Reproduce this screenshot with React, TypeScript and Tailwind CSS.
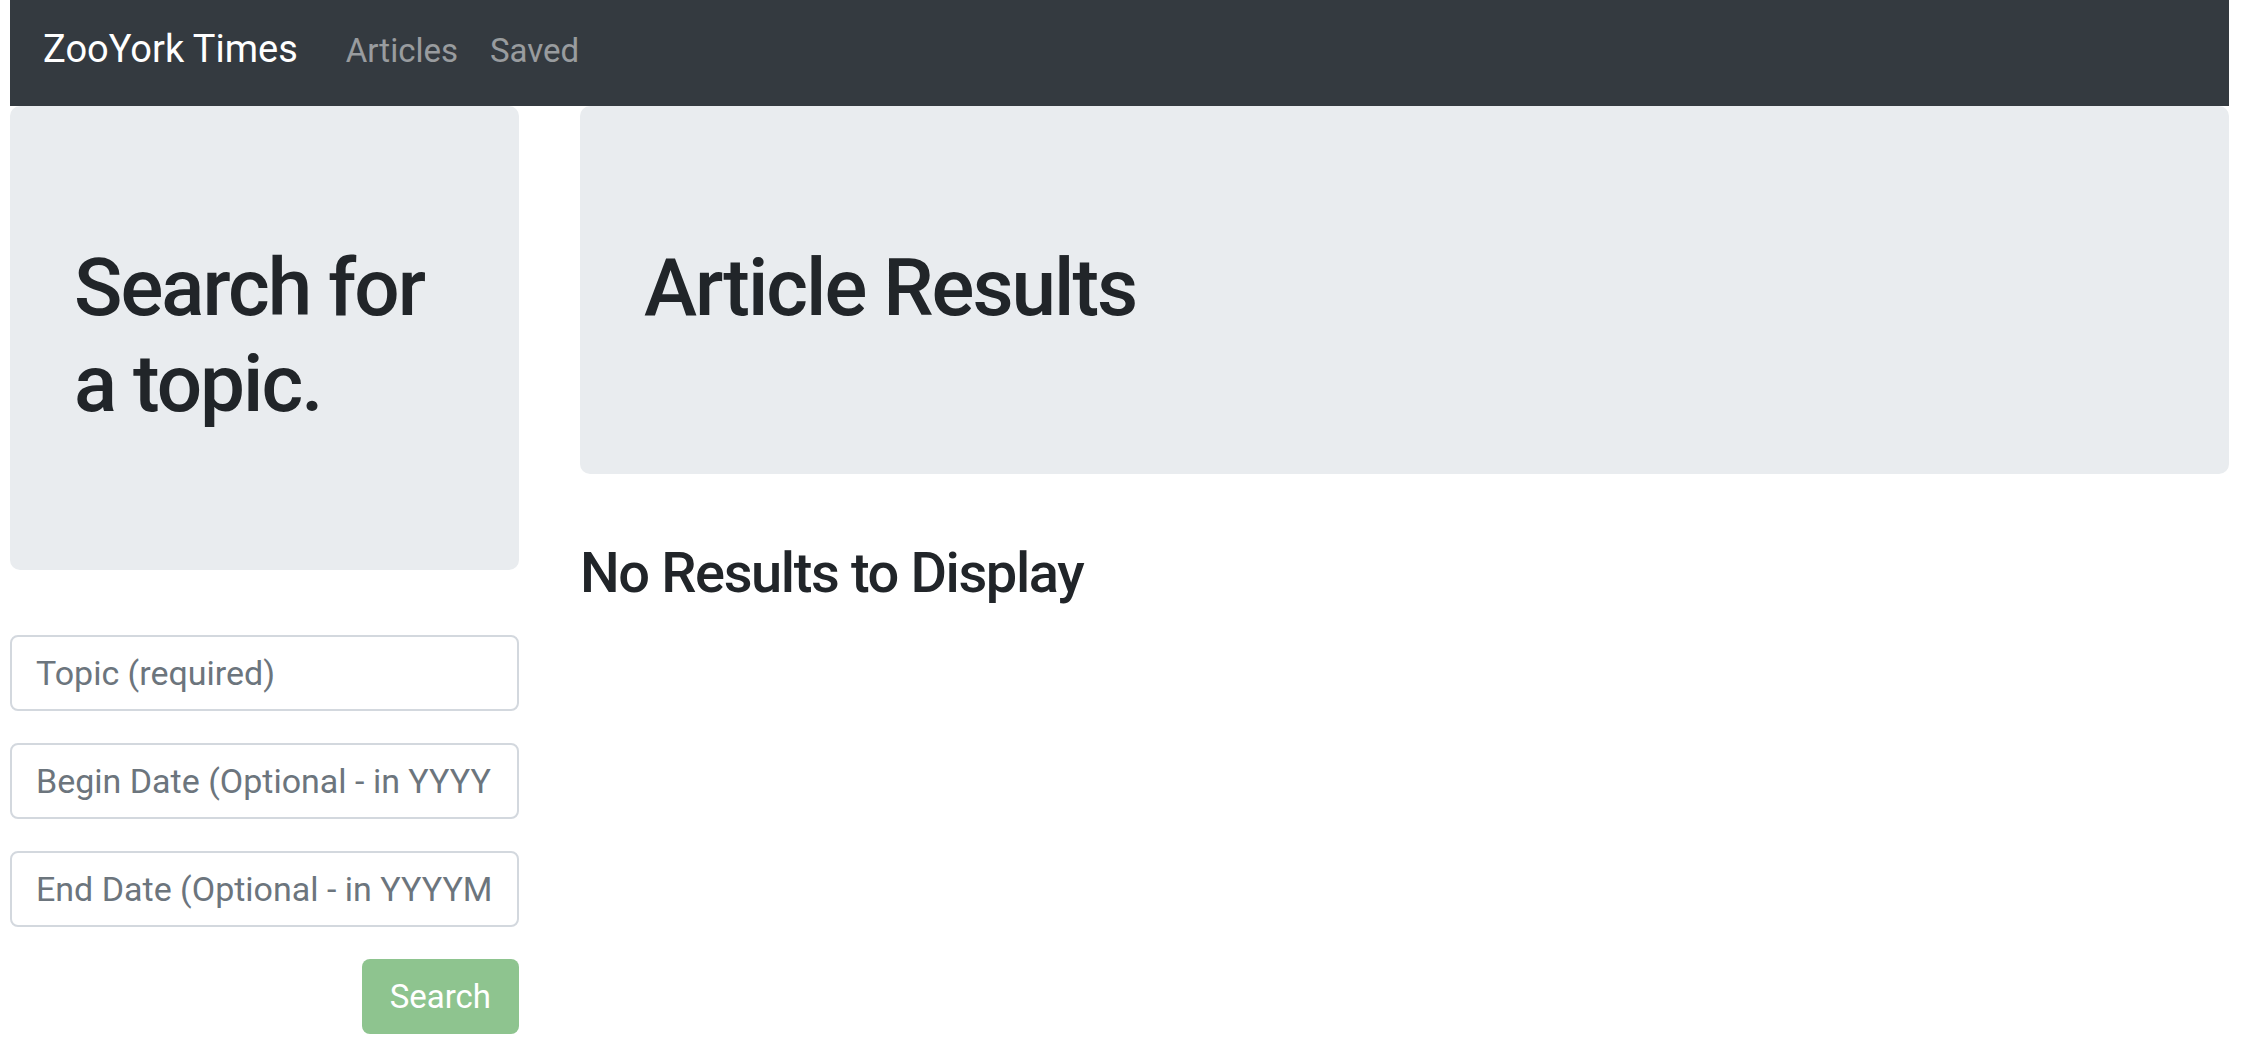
const font = { fontFamily: 'Roboto, "Liberation Sans", Arial, sans-serif' };

const NavBar = () => (
  <nav className="flex h-[106px] items-baseline bg-[#343a40] pl-[33px] pt-[21px]">
    <a className="mr-[32px] text-[38px] leading-[57px] text-white">ZooYork Times</a>
    <a className="px-[16px] text-[33px] leading-[50px] text-white/50">Articles</a>
    <a className="px-[16px] text-[33px] leading-[50px] text-white/50">Saved</a>
  </nav>
);

const Jumbotron = ({ children }: { children: React.ReactNode }) => (
  <div className="rounded-[10px] bg-[#e9ecef] px-[64px] pb-[122px] pt-[134px]">
    <h1 className="mb-[16px] text-[80px] font-medium leading-[96px] tracking-[-0.025em] text-[#212529]">
      {children}
    </h1>
  </div>
);

const fields = [
  "Topic (required)",
  "Begin Date (Optional - in YYYYMMDD format)",
  "End Date (Optional - in YYYYMMDD format)",
];

export default function App() {
  return (
    <div className="min-h-screen bg-white pl-[10px] pr-[17px]" style={font}>
      <NavBar />
      <div className="flex gap-[61px]">
        <aside className="flex w-[509px] shrink-0 flex-col">
          <Jumbotron>
            Search for
            <br />a topic.
          </Jumbotron>
          <form className="mt-[65px] flex flex-col gap-[32px]">
            {fields.map((f) => (
              <input
                key={f}
                type="text"
                placeholder={f}
                className="h-[76px] w-full rounded-[8px] border-2 border-[#d3d8de] bg-white px-[24px] text-[34px] text-[#495057] placeholder:text-[#6c757d] focus:outline-none"
              />
            ))}
            <div className="flex justify-end">
              <button
                type="button"
                className="h-[75px] rounded-[8px] bg-[#8ec48f] px-[28px] text-[33px] text-white"
              >
                Search
              </button>
            </div>
          </form>
        </aside>
        <main className="min-w-0 flex-1">
          <Jumbotron>Article Results</Jumbotron>
          <h3 className="mt-[66px] text-[56px] font-medium leading-[67px] tracking-[-0.025em] text-[#212529]">
            No Results to Display
          </h3>
        </main>
      </div>
    </div>
  );
}
